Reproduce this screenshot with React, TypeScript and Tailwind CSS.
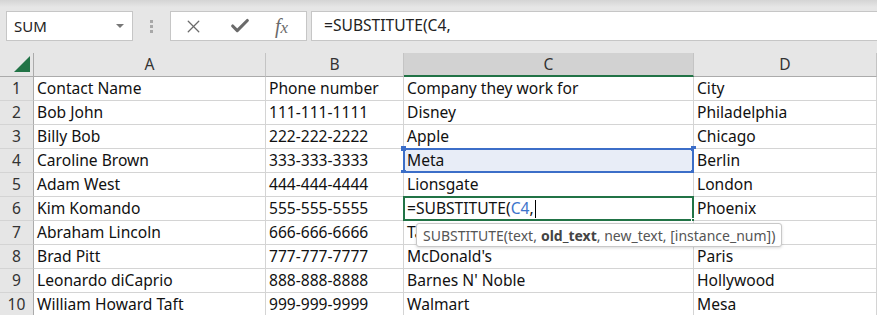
import { X, Check } from "lucide-react";

const rows = [
  ["Contact Name", "Phone number", "Company they work for", "City"],
  ["Bob John", "111-111-1111", "Disney", "Philadelphia"],
  ["Billy Bob", "222-222-2222", "Apple", "Chicago"],
  ["Caroline Brown", "333-333-3333", "Meta", "Berlin"],
  ["Adam West", "444-444-4444", "Lionsgate", "London"],
  ["Kim Komando", "555-555-5555", "", "Phoenix"],
  ["Abraham Lincoln", "666-666-6666", "Target", "Houston"],
  ["Brad Pitt", "777-777-7777", "McDonald's", "Paris"],
  ["Leonardo diCaprio", "888-888-8888", "Barnes N' Noble", "Hollywood"],
  ["William Howard Taft", "999-999-9999", "Walmart", "Mesa"],
];

const font = { fontFamily: '"Noto Sans", "Open Sans", sans-serif' };

const Toolbar = () => (
  <div className="h-[53px] bg-[linear-gradient(#d4d4d4,#e6e6e6_7px,#e6e6e6)] flex items-start pt-[11px] pl-[6px] gap-0">
    <div className="w-[127px] h-[30px] bg-white border border-[#c6c6c6] flex items-center justify-between pl-[7px] pr-[8px]">
      <span className="text-[15px] text-[#222]">SUM</span>
      <span className="w-0 h-0 border-l-[4px] border-r-[4px] border-t-[4px] border-l-transparent border-r-transparent border-t-[#777]" />
    </div>
    <div className="w-[37px] h-[30px] flex flex-col items-center justify-center gap-[2px]">
      <span className="w-[3px] h-[3px] bg-[#a8a8a8]" />
      <span className="w-[3px] h-[3px] bg-[#a8a8a8]" />
      <span className="w-[3px] h-[3px] bg-[#a8a8a8]" />
    </div>
    <div className="w-[137px] h-[30px] bg-white border border-[#c6c6c6] flex items-center pl-[12px] text-[#6a6a6a]">
      <X className="w-[21px] h-[21px]" strokeWidth={1.5} />
      <Check className="ml-[25px] w-[22px] h-[22px]" strokeWidth={3.4} />
      <span className="ml-[24px] text-[20px] italic leading-none" style={{ fontFamily: '"Liberation Serif", serif' }}>
        f<span className="text-[17px]">x</span>
      </span>
    </div>
    <div className="ml-[4px] flex-1 h-[30px] bg-white border border-[#c6c6c6] border-r-0 flex items-center pl-[12px] text-[15.6px] text-[#222]">
      =SUBSTITUTE(C4,
    </div>
  </div>
);

const ColHead = ({ label, selected }: { label: string; selected?: boolean }) => (
  <div
    className={`h-[24px] flex items-center justify-center pt-[1px] text-[15.6px] text-[#333] border-r border-r-[#c4c4c4] border-b ${
      selected ? "bg-[#d2d2d2] border-b-2 border-b-[#217346]" : "bg-[#e6e6e6] border-b-[#ababab]"
    }`}
  >
    {label}
  </div>
);

export default function App() {
  return (
    <div className="w-[877px] h-[315px] overflow-hidden bg-white relative" style={font}>
      <Toolbar />
      <div className="grid grid-cols-[34px_232px_138px_290px_1fr]">
        <div className="h-[24px] bg-[#e6e6e6] border-r border-r-[#ababab] border-b border-b-[#ababab] flex items-end justify-end pr-[3px] pb-[4px]">
          <span className="w-0 h-0 border-l-[16px] border-b-[16px] border-l-transparent border-b-[#217346]" />
        </div>
        <ColHead label="A" />
        <ColHead label="B" />
        <ColHead label="C" selected />
        <ColHead label="D" />
        {rows.map((r, i) => {
          const n = i + 1;
          return [
            <div
              key={`h${n}`}
              className="h-[24px] bg-[#e6e6e6] border-r border-r-[#ababab] border-b border-b-[#d4d4d4] flex items-center justify-center pt-[1px] text-[15.6px] text-[#333]"
            >
              {n}
            </div>,
            ...r.map((c, j) => {
              const isActive = n === 6 && j === 2;
              const isRange = n === 4 && j === 2;
              return (
                <div
                  key={`c${n}-${j}`}
                  className={`h-[24px] border-r border-b border-[#d4d4d4] pl-[3px] pt-[1px] flex items-center text-[15.6px] text-[#111] whitespace-nowrap overflow-visible relative ${
                    isRange ? "bg-[#e8edf7]" : "bg-white"
                  }`}
                >
                  {isActive ? (
                    <>
                      <span>=SUBSTITUTE(</span>
                      <span className="text-[#3c74cc]">C4</span>
                      <span>,</span>
                      <span className="w-px h-[18px] bg-black ml-[1px]" />
                      <span className="absolute left-[-1px] top-[-1px] right-[-1px] bottom-[-1px] border-2 border-[#217346]" />
                      <span className="absolute right-[-3px] bottom-[-3px] w-[5px] h-[5px] bg-[#217346] border border-white" />
                    </>
                  ) : (
                    c
                  )}
                  {isRange && (
                    <>
                      <span className="absolute left-[-1px] top-[-1px] right-[-1px] bottom-[-1px] border-2 border-[#3c6ec8]" />
                      <span className="absolute left-[-3px] top-[-3px] w-[5px] h-[5px] bg-[#3c6ec8]" />
                      <span className="absolute right-[-3px] top-[-3px] w-[5px] h-[5px] bg-[#3c6ec8]" />
                      <span className="absolute left-[-3px] bottom-[-3px] w-[5px] h-[5px] bg-[#3c6ec8]" />
                      <span className="absolute right-[-3px] bottom-[-3px] w-[5px] h-[5px] bg-[#3c6ec8]" />
                    </>
                  )}
                </div>
              );
            }),
          ];
        })}
      </div>
      <div className="absolute left-[416px] top-[223px] h-[24px] px-[6px] flex items-center bg-white border border-[#c8c8c8] rounded-[3px] shadow-[0_1px_3px_rgba(0,0,0,0.15)] text-[14px] text-[#555] whitespace-nowrap">
        SUBSTITUTE(text, <b className="ml-[4px] text-[#444]">old_text</b>, new_text, [instance_num])
      </div>
    </div>
  );
}
